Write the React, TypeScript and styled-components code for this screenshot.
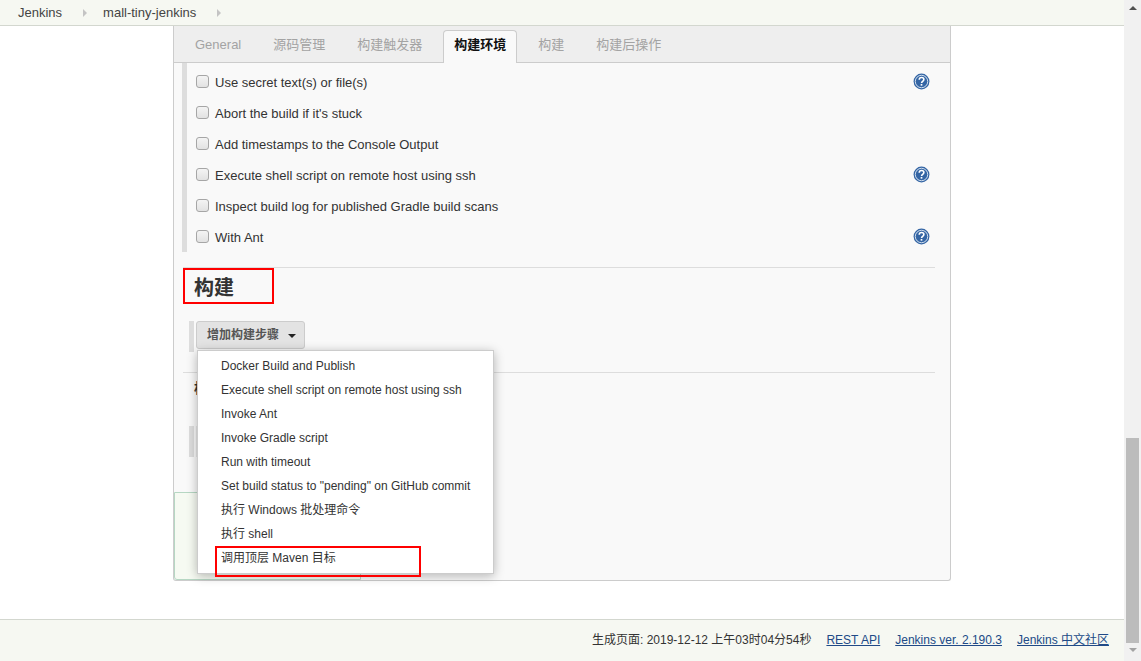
import styled, { createGlobalStyle } from 'styled-components';

const GlobalStyle = createGlobalStyle`
  html, body {
    margin: 0;
    height: 100%;
    overflow: hidden;
    background: #fff;
  }
  body {
    font-family: "Liberation Sans", "Noto Sans CJK SC", sans-serif;
    font-size: 13px;
    color: #333;
  }
`;

const Page = styled.div`
  display: flex;
  height: 100vh;
`;

const Main = styled.div`
  flex: 1;
  min-width: 0;
  display: flex;
  flex-direction: column;
`;

const TopBar = styled.div`
  flex: none;
  height: 25px;
  display: flex;
  align-items: center;
  padding-left: 18px;
  background: #f6f8f2;
  border-bottom: 1px solid #d3d7cf;
  color: #444;
`;

const Crumb = styled.span`
  line-height: 25px;
`;

const CrumbArrow = styled.span`
  width: 0;
  height: 0;
  margin: 1px 16px 0 21px;
  border-left: 4px solid #c4c4c4;
  border-top: 4px solid transparent;
  border-bottom: 4px solid transparent;
`;

const Content = styled.div`
  flex: 1;
  min-height: 0;
  padding-left: 173px;
`;

const Card = styled.div`
  position: relative;
  box-sizing: border-box;
  width: 778px;
  height: 555px;
  display: flex;
  flex-direction: column;
  background: #f9f9f9;
  border: 1px solid #ccc;
  border-top: none;
  border-radius: 0 0 3px 3px;
`;

const TabBar = styled.div`
  flex: none;
  box-sizing: border-box;
  height: 37px;
  display: flex;
  align-items: flex-end;
  gap: 10px;
  padding-left: 10px;
  background: #eee;
  border-bottom: 1px solid #ccc;
`;

const Tab = styled.div<{ $active?: boolean }>`
  box-sizing: border-box;
  height: ${p => (p.$active ? '33px' : '32px')};
  line-height: 28px;
  padding: 0 10px;
  color: ${p => (p.$active ? '#111' : '#a3a3a3')};
  font-weight: ${p => (p.$active ? 600 : 400)};
  background: ${p => (p.$active ? '#f9f9f9' : 'transparent')};
  border: 1px solid ${p => (p.$active ? '#ccc' : 'transparent')};
  border-bottom: none;
  border-radius: 4px 4px 0 0;
  margin-bottom: ${p => (p.$active ? '-1px' : '0')};
`;

const Options = styled.div`
  flex: none;
  margin-left: 8px;
  padding-right: 11px;
  height: 189px;
  border-left: 5px solid #ddd;
`;

const OptionRow = styled.div`
  height: 31px;
  display: flex;
  align-items: center;
  padding-left: 9px;
  &:first-child {
    margin-top: 4px;
  }
`;

const Checkbox = styled.span`
  flex: none;
  box-sizing: border-box;
  width: 13px;
  height: 13px;
  margin: -3px 6px 0 0;
  border: 1px solid #a6a6a6;
  border-radius: 3px;
  background: linear-gradient(#f4f4f4, #e2e2e2);
`;

const OptionLabel = styled.span`
  flex: 1;
  color: #333;
`;

const Help = styled.svg`
  flex: none;
  width: 17px;
  height: 17px;
  margin: -3px 9px 0 0;
`;

const Section = styled.div`
  flex: none;
  position: relative;
  margin: 15px 15px 0 9px;
  border-top: 1px solid #ddd;
`;

const Heading = styled.h2`
  margin: 0;
  padding: 0 0 0 11px;
  height: 38px;
  line-height: 40px;
  font-size: 20px;
  font-weight: 700;
  color: #333;
`;

const Annotation = styled.div`
  position: absolute;
  box-sizing: border-box;
  border: 2px solid #f00;
  pointer-events: none;
`;

const HeadingMark = styled(Annotation)`
  left: 0;
  top: 0;
  width: 91px;
  height: 36px;
`;

const StepBar = styled.div`
  position: relative;
  margin: 15px 0 0 6px;
  height: 31px;
  padding-left: 2px;
  border-left: 5px solid #ddd;
`;

const AddButton = styled.button`
  display: flex;
  align-items: center;
  box-sizing: border-box;
  width: 109px;
  height: 28px;
  padding: 0 0 3px 10px;
  font: inherit;
  font-size: 12px;
  font-weight: 600;
  color: #555;
  background: #e3e3e3;
  border: 1px solid #ccc;
  border-radius: 3px;
`;

const Caret = styled.span`
  width: 0;
  height: 0;
  margin: 5px 0 0 9px;
  border-top: 4px solid #222;
  border-left: 4px solid transparent;
  border-right: 4px solid transparent;
`;

const Menu = styled.ul`
  position: absolute;
  z-index: 2;
  left: 3px;
  top: 29px;
  box-sizing: border-box;
  width: 297px;
  height: 224px;
  margin: 0;
  padding: 3px 0 0;
  list-style: none;
  background: #fff;
  border: 1px solid #ccc;
  box-shadow: 0 2px 10px rgba(0, 0, 0, 0.28);
`;

const MenuItem = styled.li`
  height: 24px;
  line-height: 24px;
  padding-left: 23px;
  font-size: 12px;
  color: #333;
`;

const MenuMark = styled(Annotation)`
  left: 17px;
  top: 195px;
  width: 206px;
  height: 31px;
`;

const NextSection = styled.div`
  flex: none;
  margin: 20px 15px 0 9px;
  border-top: 1px solid #ddd;
`;

const NextHeading = styled.h3`
  margin: 0;
  padding-left: 11px;
  height: 30px;
  line-height: 30px;
  font-size: 14px;
  font-weight: 700;
  color: #333;
`;

const NextBar = styled.div`
  margin: 23px 0 0 6px;
  width: 9px;
  height: 31px;
  border-left: 5px solid #ddd;
  border-right: 2px solid #e6e6e6;
  box-sizing: border-box;
`;

const SavePanel = styled.div`
  box-sizing: border-box;
  width: 187px;
  height: 88px;
  margin-top: auto;
  background: #f6faf2;
  border: 1px solid #b6d7c3;
  border-radius: 0 0 0 3px;
`;

const Footer = styled.div`
  flex: none;
  box-sizing: border-box;
  height: 42px;
  display: flex;
  align-items: center;
  justify-content: flex-end;
  gap: 15px;
  padding: 0 15px 1px 0;
  font-size: 12px;
  line-height: 14px;
  color: #333;
  background: #f6f8f2;
  border-top: 1px solid #d3d7cf;
`;

const FooterLink = styled.a`
  color: #204a87;
  text-decoration: underline;
`;

const Scrollbar = styled.div`
  flex: none;
  width: 17px;
  display: flex;
  flex-direction: column;
  align-items: center;
  background: #f1f1f1;
`;

const ScrollArrow = styled.span<{ $down?: boolean }>`
  flex: none;
  width: 0;
  height: 0;
  margin: ${p => (p.$down ? '5px 0 0' : '6px 0 0')};
  border-left: 4px solid transparent;
  border-right: 4px solid transparent;
  border-bottom: ${p => (p.$down ? 'none' : '4px solid #505050')};
  border-top: ${p => (p.$down ? '4px solid #a3a3a3' : 'none')};
`;

const ScrollThumb = styled.span`
  flex: none;
  width: 13px;
  height: 205px;
  margin-top: 428px;
  background: #bcbcbc;
`;

function HelpIcon() {
  return (
    <Help viewBox="0 0 18 18" aria-hidden="true">
      <circle cx="9" cy="9" r="8.4" fill="#3465a4" />
      <circle cx="9" cy="9" r="6.6" fill="none" stroke="#dbe5f1" strokeWidth="1" />
      <path
        d="M6.6 7.2c0-1.5 1-2.4 2.5-2.4s2.4.9 2.4 2.1c0 1.9-2.4 1.9-2.4 3.6"
        fill="none"
        stroke="#fff"
        strokeWidth="1.7"
      />
      <rect x="8.1" y="11.6" width="1.8" height="1.8" fill="#fff" />
    </Help>
  );
}

const tabs = ['General', '源码管理', '构建触发器', '构建环境', '构建', '构建后操作'];

const options = [
  { label: 'Use secret text(s) or file(s)', help: true },
  { label: "Abort the build if it's stuck", help: false },
  { label: 'Add timestamps to the Console Output', help: false },
  { label: 'Execute shell script on remote host using ssh', help: true },
  { label: 'Inspect build log for published Gradle build scans', help: false },
  { label: 'With Ant', help: true },
];

const menuItems = [
  'Docker Build and Publish',
  'Execute shell script on remote host using ssh',
  'Invoke Ant',
  'Invoke Gradle script',
  'Run with timeout',
  'Set build status to "pending" on GitHub commit',
  '执行 Windows 批处理命令',
  '执行 shell',
  '调用顶层 Maven 目标',
];

function App() {
  return (
    <>
      <GlobalStyle />
      <Page>
        <Main>
          <TopBar>
            <Crumb>Jenkins</Crumb>
            <CrumbArrow />
            <Crumb>mall-tiny-jenkins</Crumb>
            <CrumbArrow />
          </TopBar>
          <Content>
            <Card>
              <TabBar>
                {tabs.map(tab => (
                  <Tab key={tab} $active={tab === '构建环境'}>
                    {tab}
                  </Tab>
                ))}
              </TabBar>
              <Options>
                {options.map(option => (
                  <OptionRow key={option.label}>
                    <Checkbox />
                    <OptionLabel>{option.label}</OptionLabel>
                    {option.help && <HelpIcon />}
                  </OptionRow>
                ))}
              </Options>
              <Section>
                <Heading>构建</Heading>
                <HeadingMark />
                <StepBar>
                  <AddButton>
                    增加构建步骤
                    <Caret />
                  </AddButton>
                  <Menu>
                    {menuItems.map(item => (
                      <MenuItem key={item}>{item}</MenuItem>
                    ))}
                    <MenuMark />
                  </Menu>
                </StepBar>
              </Section>
              <NextSection>
                <NextHeading>构建后操作</NextHeading>
                <NextBar />
              </NextSection>
              <SavePanel />
            </Card>
          </Content>
          <Footer>
            <span>生成页面: 2019-12-12 上午03时04分54秒</span>
            <FooterLink href="#">REST API</FooterLink>
            <FooterLink href="#">Jenkins ver. 2.190.3</FooterLink>
            <FooterLink href="#">Jenkins 中文社区</FooterLink>
          </Footer>
        </Main>
        <Scrollbar>
          <ScrollArrow />
          <ScrollThumb />
          <ScrollArrow $down />
        </Scrollbar>
      </Page>
    </>
  );
}

export default App;
